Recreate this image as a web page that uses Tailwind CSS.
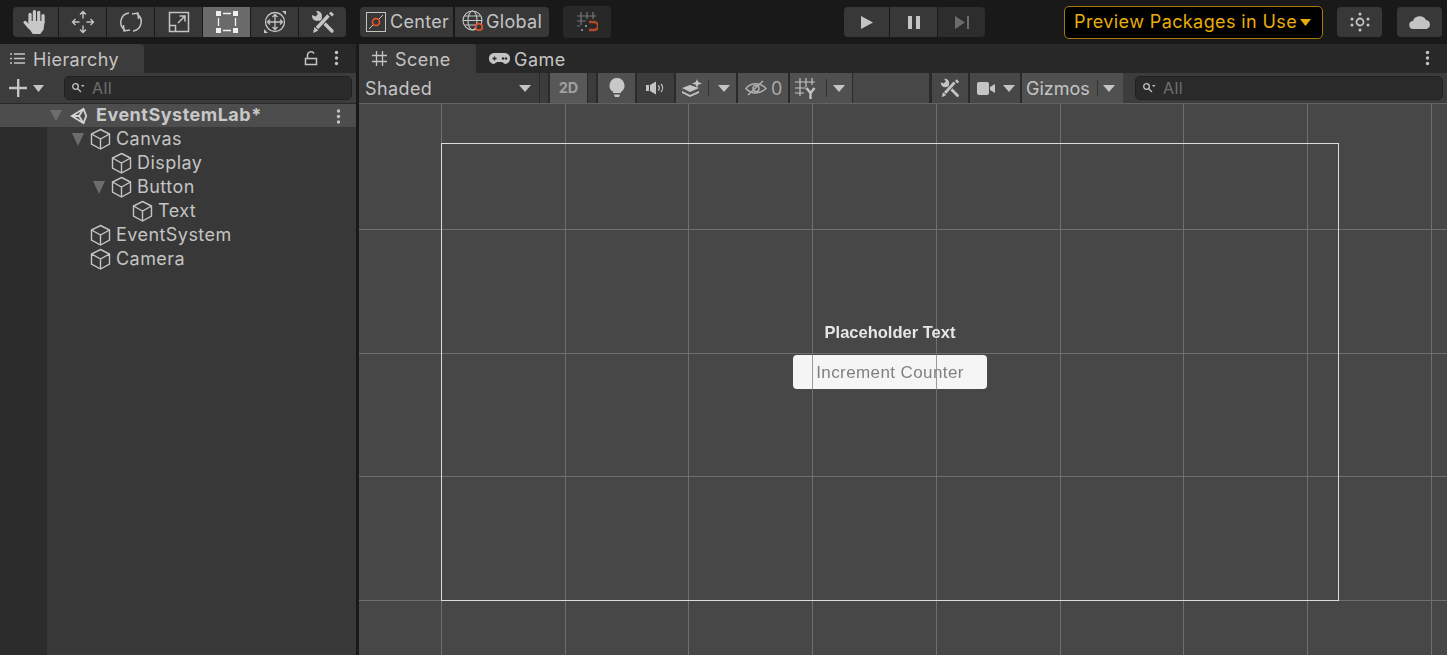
<!DOCTYPE html>
<html lang="en">
<head>
<meta charset="UTF-8">
<title>Unity Editor - Scene</title>
<script src="https://cdn.jsdelivr.net/npm/@tailwindcss/browser@4"></script>
</head>
<body class="bg-[#191919] overflow-hidden font-['Inter',sans-serif] text-[#c4c4c4]">
<div class="w-[1447px] h-[655px] flex flex-col overflow-hidden">

  <!-- main toolbar -->
  <header class="h-[44px] shrink-0 flex items-center pl-[13px] text-[18px] tracking-[0.3px]">
    <div class="flex h-[30px] w-[333px] rounded-[4px] overflow-hidden gap-px">
      <div class="w-[45px] bg-[#383838] flex items-center justify-center">
        <svg width="26" height="26" viewBox="0 0 24 24" fill="#c8c8c8" stroke="#c8c8c8"><path d="M6.500 12V5M10.500 11V2.500M14.500 11V3M18.500 12V6" stroke-width="3" stroke-linecap="round" fill="none"/><path d="M2 12.500 6 17" stroke-width="3" stroke-linecap="round" fill="none"/><path d="M5 11h15l-1 8-3 4H9l-4-6Z" stroke="none"/></svg>
      </div>
      <div class="w-[47px] bg-[#383838] flex items-center justify-center">
        <svg width="24" height="24" viewBox="0 0 24 24" fill="none" stroke="#c4c4c4" stroke-width="1.400"><path d="M12 1.500v7M12 15.500v7M1.500 12h7M15.500 12h7M9 4.500l3-3 3 3M9 19.500l3 3 3-3M4.500 9l-3 3 3 3M19.500 9l3 3-3 3"/></svg>
      </div>
      <div class="w-[47px] bg-[#383838] flex items-center justify-center">
        <svg width="24" height="24" viewBox="0 0 24 24" fill="none" stroke="#c4c4c4" stroke-width="1.500"><path d="M10 3A9.300 9.300 0 0 0 6 20M11 20 5 21l-.5-6M14 21A9.300 9.300 0 0 0 18 4M13 4l6-1 .5 6"/></svg>
      </div>
      <div class="w-[47px] bg-[#383838] flex items-center justify-center">
        <svg width="24" height="24" viewBox="0 0 24 24" fill="none" stroke="#c4c4c4" stroke-width="1.500"><path d="M2.500 2.500h19v19h-19zM2.500 15.500h6v6M11 13l7-7M12.500 6H18v5.500"/></svg>
      </div>
      <div class="w-[47px] bg-[#6a6a6a] flex items-center justify-center">
        <svg width="24" height="24" viewBox="0 0 24 24" fill="#f0f0f0"><path d="M1 1h5v5H1zM18 1h5v5h-5zM1 18h5v5H1zM18 18h5v5h-5z"/><path d="M8 3.500h8M8 20.500h8M3.500 8v8M20.500 8v8" stroke="#f0f0f0" stroke-width="1.300"/></svg>
      </div>
      <div class="w-[47px] bg-[#383838] flex items-center justify-center">
        <svg width="24" height="24" viewBox="0 0 24 24" fill="none" stroke="#c4c4c4" stroke-width="1.300"><circle cx="12" cy="12" r="9.500"/><path d="M12 4.500v15M4.500 12h15M9.500 7 12 4.500 14.500 7M9.500 17l2.500 2.500 2.500-2.500M7 9.500 4.500 12 7 14.500M17 9.500l2.500 2.500-2.500 2.500"/><path d="M19 1h4v4zM1 23v-4l4 4z" fill="#c4c4c4" stroke="none"/></svg>
      </div>
      <div class="w-[47px] bg-[#383838] flex items-center justify-center">
        <svg width="24" height="24" viewBox="0 0 24 24" fill="none"><path d="M7 7 21 21" stroke="#c4c4c4" stroke-width="3.400" stroke-linecap="round"/><circle cx="6" cy="6" r="5" fill="#c4c4c4"/><path d="M0 1h5l2 3-2.500 2.500L1 5Z" fill="#383838"/><path d="M18 5 6 18" stroke="#383838" stroke-width="5.500"/><path d="M17.500 5.500 6 18" stroke="#c4c4c4" stroke-width="3.400"/><path d="M20 1.500l3 3-2 2-3-3zM2 23l1.500-6 4 3.500z" fill="#c4c4c4"/></svg>
      </div>
    </div>

    <div class="ml-[14px] flex h-[30px] w-[189px] rounded-[4px] overflow-hidden gap-[2px]">
      <div class="w-[93px] bg-[#383838] flex items-center pl-[6px] gap-[4px]">
        <svg width="20" height="20" viewBox="0 0 20 20" fill="none"><rect x=".5" y=".5" width="19" height="19" stroke="#c4c4c4"/><path d="M3 17 17 3" stroke="#c4c4c4"/><circle cx="10" cy="10" r="3.500" stroke="#f0562a" stroke-width="1.600" fill="#383838"/></svg>
        <span class="pb-[2px]">Center</span>
      </div>
      <div class="flex-1 bg-[#383838] flex items-center pl-[7px] gap-[1px]">
        <svg width="23" height="24" viewBox="0 0 23 24" fill="none" stroke="#c4c4c4" stroke-width="1.100"><circle cx="10.500" cy="10.500" r="9.500"/><ellipse cx="10.500" cy="10.500" rx="4.500" ry="9.500"/><path d="M1 10.500h19M2.500 6h16M2.500 15h16"/><circle cx="17" cy="17" r="3.300" stroke="#f0562a" stroke-width="1.600" fill="#383838"/></svg>
        <span class="pb-[2px]">Global</span>
      </div>
    </div>

    <div class="ml-[14px] w-[48px] h-[32px] rounded-[4px] bg-[#282828] flex items-center justify-center">
      <svg width="22" height="22" viewBox="0 0 22 22" fill="none" stroke="#777" stroke-width="1.200"><path d="M5 1v13M11 1v7M17 1v7M1 5h19M1 10h9M1 15h3"/><path d="M14 11h5a3.500 3.500 0 0 1 0 8h-5" stroke="#b5492a" stroke-width="2.400" transform="translate(-1 0)"/><path d="M9 14h2v2H9zM5 18h2v2H5z" fill="#888" stroke="none"/></svg>
    </div>

    <div class="ml-[233px] flex h-[30px] w-[141px] rounded-[4px] overflow-hidden gap-px">
      <div class="w-[45px] bg-[#383838] flex items-center justify-center">
        <svg width="14" height="15" viewBox="0 0 14 15" fill="#c4c4c4"><path d="M1 1 13 7.500 1 14Z"/></svg>
      </div>
      <div class="w-[47px] bg-[#383838] flex items-center justify-center">
        <svg width="14" height="15" viewBox="0 0 14 15" fill="#c4c4c4"><path d="M1 1h4v13H1zM9 1h4v13H9z"/></svg>
      </div>
      <div class="flex-1 bg-[#2d2d2d] flex items-center justify-center">
        <svg width="16" height="15" viewBox="0 0 16 15" fill="#6c6c6c"><path d="M1 1 11 7.500 1 14ZM13 1h2v13h-2z"/></svg>
      </div>
    </div>

    <div class="ml-[79px] w-[259px] h-[33px] rounded-[5px] border border-[#a87a0a] bg-black text-[#e8ad0a] flex items-center pl-[9px] text-[18px] tracking-[0.4px] whitespace-nowrap">
      <span class="pb-[2px]">Preview Packages in Use</span>
      <svg class="ml-[3px]" width="11" height="7" viewBox="0 0 11 7" fill="#e8ad0a"><path d="M0 0h11L5.500 7Z"/></svg>
    </div>

    <div class="ml-[14px] w-[45px] h-[30px] rounded-[4px] bg-[#383838] flex items-center justify-center">
      <svg width="20" height="20" viewBox="0 0 20 20" fill="#c4c4c4"><circle cx="10" cy="10" r="3.500" fill="none" stroke="#c4c4c4" stroke-width="1.800"/><circle cx="10" cy="2" r="1.500"/><circle cx="10" cy="18" r="1.500"/><circle cx="2" cy="7" r="1.500"/><circle cx="18" cy="7" r="1.500"/><circle cx="2" cy="13" r="1.500"/><circle cx="18" cy="13" r="1.500"/></svg>
    </div>
    <div class="ml-[15px] w-[45px] h-[30px] rounded-[4px] bg-[#383838] flex items-center justify-center">
      <svg width="22" height="16" viewBox="0 0 22 16" fill="#c4c4c4"><path d="M4.500 15a4 4 0 0 1-.5-8 7 6.500 0 0 1 13-1 4.600 4.600 0 0 1 .5 9Z"/></svg>
    </div>
  </header>

  <div class="flex flex-1 min-h-0 gap-[3px]">

    <!-- hierarchy -->
    <aside class="w-[356px] shrink-0 flex flex-col bg-[#383838]">
      <div class="h-[29px] bg-[#282828] flex relative shrink-0">
        <div class="w-[144px] bg-[#3c3c3c] rounded-tr-[4px] flex items-center pl-[10px] gap-[8px] text-[18px] tracking-[0.4px]">
          <svg width="15" height="13" viewBox="0 0 15 13" fill="none" stroke="#c4c4c4" stroke-width="1.400"><path d="M4 2h11M4 6.500h11M4 11h11"/><path d="M0 2h2M0 6.500h2M0 11h2"/></svg>
          <span class="pt-[2px]">Hierarchy</span>
        </div>
        <svg class="absolute left-[304px] top-[6px]" width="14" height="16" viewBox="0 0 14 16" fill="none" stroke="#c4c4c4" stroke-width="1.500"><path d="M1.500 8.500h11v6h-11zM3.500 8.500V5a3.500 3.500 0 0 1 6.500-1.500"/></svg>
        <svg class="absolute left-[334px] top-[6px]" width="5" height="16" viewBox="0 0 5 16" fill="#c4c4c4"><circle cx="2.500" cy="2.500" r="1.700"/><circle cx="2.500" cy="8" r="1.700"/><circle cx="2.500" cy="13.500" r="1.700"/></svg>
      </div>
      <div class="h-[31px] bg-[#3c3c3c] flex items-center shrink-0 border-b border-[#282828]">
        <svg class="ml-[9px]" width="18" height="18" viewBox="0 0 18 18" fill="#c4c4c4"><path d="M8 0h2.400v18H8zM0 7.800h18v2.400H0z"/></svg>
        <svg class="ml-[6px]" width="11" height="7" viewBox="0 0 11 7" fill="#c4c4c4"><path d="M0 0h11L5.500 7Z"/></svg>
        <div class="ml-[20px] w-[288px] h-[24px] rounded-[5px] bg-[#2a2a2a] border border-[#212121] flex items-center pl-[6px] text-[#6f6f6f] text-[16px] tracking-[0.4px] gap-[7px]">
          <svg width="14" height="12" viewBox="0 0 14 12" fill="none" stroke="#c4c4c4" stroke-width="1.300"><circle cx="4.500" cy="4.500" r="2.800"/><path d="m6.500 6.500 3.500 3.500"/><path d="M10 3h3.500L11.700 5Z" fill="#c4c4c4" stroke="none"/></svg>
          <span>All</span>
        </div>
      </div>
      <div class="flex-1 flex min-h-0 relative text-[18px] tracking-[0.45px] leading-[24px]">
        <div class="w-[47px] bg-[#2c2c2c] shrink-0"></div>
        <div class="flex-1"></div>
        <div class="absolute inset-0">
          <div class="h-[23px] bg-[#4d4d4d] flex items-center pl-[50px] font-bold text-[#c8c8c8] relative tracking-[0.5px]">
            <svg width="12" height="11" viewBox="0 0 12 11" fill="#6c6c6c"><path d="M0 0h12L6 11Z"/></svg>
            <svg class="ml-[8px]" width="18" height="20" viewBox="0 0 20 20" fill="none" stroke="#d4d4d4" stroke-width="2"><path d="M2 10 15 2l3 8-3 8ZM15 2l-5 8 5 8M2 10h8"/></svg>
            <span class="ml-[8px] pb-[1px]">EventSystemLab*</span>
            <svg class="absolute left-[336px] top-[5px]" width="5" height="15" viewBox="0 0 5 15" fill="#c4c4c4"><circle cx="2.500" cy="2" r="1.700"/><circle cx="2.500" cy="7.500" r="1.700"/><circle cx="2.500" cy="13" r="1.700"/></svg>
          </div>
          <ul>
            <li class="h-[24px] flex items-center pl-[72px]">
              <svg width="12" height="13" viewBox="0 0 12 13" fill="#6c6c6c"><path d="M0 0h12L6 13Z"/></svg>
              <svg class="ml-[6px] mr-[5px]" width="21" height="22" viewBox="0 0 21 22" fill="none" stroke="#c4c4c4" stroke-width="1.400"><path d="M10.500 1.500 19.500 6v10l-9 5-9-5V6ZM1.500 6l9 5 9-5M10.500 11v10"/></svg>
              <span>Canvas</span>
            </li>
            <li class="h-[24px] flex items-center pl-[111px]">
              <svg class="mr-[5px]" width="21" height="22" viewBox="0 0 21 22" fill="none" stroke="#c4c4c4" stroke-width="1.400"><path d="M10.500 1.500 19.500 6v10l-9 5-9-5V6ZM1.500 6l9 5 9-5M10.500 11v10"/></svg>
              <span>Display</span>
            </li>
            <li class="h-[24px] flex items-center pl-[93px]">
              <svg width="12" height="13" viewBox="0 0 12 13" fill="#6c6c6c"><path d="M0 0h12L6 13Z"/></svg>
              <svg class="ml-[6px] mr-[5px]" width="21" height="22" viewBox="0 0 21 22" fill="none" stroke="#c4c4c4" stroke-width="1.400"><path d="M10.500 1.500 19.500 6v10l-9 5-9-5V6ZM1.500 6l9 5 9-5M10.500 11v10"/></svg>
              <span>Button</span>
            </li>
            <li class="h-[24px] flex items-center pl-[132px]">
              <svg class="mr-[5px]" width="21" height="22" viewBox="0 0 21 22" fill="none" stroke="#c4c4c4" stroke-width="1.400"><path d="M10.500 1.500 19.500 6v10l-9 5-9-5V6ZM1.500 6l9 5 9-5M10.500 11v10"/></svg>
              <span>Text</span>
            </li>
            <li class="h-[24px] flex items-center pl-[90px]">
              <svg class="mr-[5px]" width="21" height="22" viewBox="0 0 21 22" fill="none" stroke="#c4c4c4" stroke-width="1.400"><path d="M10.500 1.500 19.500 6v10l-9 5-9-5V6ZM1.500 6l9 5 9-5M10.500 11v10"/></svg>
              <span>EventSystem</span>
            </li>
            <li class="h-[24px] flex items-center pl-[90px]">
              <svg class="mr-[5px]" width="21" height="22" viewBox="0 0 21 22" fill="none" stroke="#c4c4c4" stroke-width="1.400"><path d="M10.500 1.500 19.500 6v10l-9 5-9-5V6ZM1.500 6l9 5 9-5M10.500 11v10"/></svg>
              <span>Camera</span>
            </li>
          </ul>
        </div>
      </div>
    </aside>

    <!-- scene -->
    <main class="flex-1 flex flex-col min-w-0">
      <div class="h-[29px] bg-[#282828] flex items-center shrink-0 relative text-[18px] tracking-[0.45px]">
        <div class="w-[117px] h-full bg-[#3c3c3c] rounded-tr-[4px] flex items-center pl-[13px] gap-[8px]">
          <svg width="15" height="15" viewBox="0 0 15 15" fill="none" stroke="#c4c4c4" stroke-width="1.300"><path d="M4.500 0v15M10.500 0v15M0 4.500h15M0 10.500h15"/></svg>
          <span class="pt-[2px]">Scene</span>
        </div>
        <div class="flex items-center pl-[13px] gap-[4px]">
          <svg width="21" height="13" viewBox="0 0 21 13" fill="#c4c4c4"><path d="M5 1h11a5 5 0 0 1 5 5.500 5 5 0 0 1-5 5.500L13 10H8l-3 2A5 5 0 0 1 0 6.500 5 5 0 0 1 5 1Z"/><path d="M3.500 6.500h4M5.500 4.500v4" stroke="#282828" stroke-width="1.300"/><circle cx="14" cy="6.500" r="1.200" fill="#282828"/><circle cx="17" cy="6.500" r="1.200" fill="#282828"/></svg>
          <span class="pt-[2px]">Game</span>
        </div>
        <svg class="absolute right-[17px] top-[6px]" width="5" height="16" viewBox="0 0 5 16" fill="#c4c4c4"><circle cx="2.500" cy="2.500" r="1.700"/><circle cx="2.500" cy="8" r="1.700"/><circle cx="2.500" cy="13.500" r="1.700"/></svg>
      </div>

      <div class="h-[31px] bg-[#2a2a2a] flex shrink-0 text-[18px] tracking-[0.4px] border-b border-[#636363]">
        <div class="w-[180px] bg-[#3c3c3c] flex items-center pl-[6px] justify-between pr-[8px]">
          <span>Shaded</span>
          <svg width="12" height="7" viewBox="0 0 12 7" fill="#c4c4c4"><path d="M0 0h12L6 7Z"/></svg>
        </div>
        <div class="w-[8px] ml-px bg-[#3c3c3c]"></div>
        <div class="w-[37px] ml-[2px] bg-[#585858] flex items-center justify-center text-[14.500px] font-bold text-[#a0a0a0] tracking-normal">2D</div>
        <div class="w-[8px] ml-px bg-[#3c3c3c]"></div>
        <div class="w-[37px] ml-[2px] bg-[#505050] flex items-center justify-center">
          <svg width="16" height="20" viewBox="0 0 16 20" fill="#c8c8c8"><path d="M8 0a7.500 7.500 0 0 1 4 13.800V15H4v-1.200A7.500 7.500 0 0 1 8 0ZM5 16.500h6l-1 2.500H6Z"/></svg>
        </div>
        <div class="w-[37px] ml-[2px] bg-[#3c3c3c] flex items-center justify-center">
          <svg width="20" height="14" viewBox="0 0 20 14" fill="#c4c4c4"><path d="M0 4h3v6H0zM4 4l6-3.500v13L4 10Z"/><path d="M12 4.500a3 3 0 0 1 0 5M15 3a6 6 0 0 1 0 8" fill="none" stroke="#c4c4c4" stroke-width="1.200"/></svg>
        </div>
        <div class="w-[60px] ml-[2px] bg-[#505050] flex items-center">
          <svg class="ml-[6px]" width="20" height="18" viewBox="0 0 20 18" fill="#c4c4c4"><path d="M8 6 17 9l-9 4-8-4ZM0 12l8 4 9-4v2l-9 4-8-4Z"/><path d="m15 0 1.200 3L20 4.500l-3.800 1.300L15 9l-1.200-3.200L10 4.500l3.800-1.500Z"/></svg>
          <div class="w-px h-[16px] bg-[#333] ml-[6px]"></div>
          <svg class="ml-[9px]" width="12" height="7" viewBox="0 0 12 7" fill="#c4c4c4"><path d="M0 0h12L6 7Z"/></svg>
        </div>
        <div class="w-[50px] ml-[2px] bg-[#505050] flex items-center pl-[7px] gap-[4px] tracking-normal text-[#a8a8a8]">
          <svg width="22" height="18" viewBox="0 0 22 18" fill="none" stroke="#b0b0b0" stroke-width="1.400"><path d="M1 9.500C5 4 15 2.500 21 9.500 15 15.500 6 15.500 1 9.500Z"/><circle cx="11" cy="9.500" r="3"/><path d="M3 16 18 2"/></svg>
          <span>0</span>
        </div>
        <div class="w-[62px] ml-[2px] bg-[#505050] flex items-center">
          <svg class="ml-[4px]" width="22" height="21" viewBox="0 0 22 21" fill="none" stroke="#c4c4c4" stroke-width="1.200"><path d="M6 0v18M12 0v9M18 0v7M1 4h20M1 10h11M1 15h9"/><path d="M12.500 10l4 5 4-5M16.500 15v6" stroke-width="2.400"/></svg>
          <div class="w-px h-[18px] bg-[#333] ml-[10px]"></div>
          <svg class="ml-[6px]" width="12" height="7" viewBox="0 0 12 7" fill="#c4c4c4"><path d="M0 0h12L6 7Z"/></svg>
        </div>
        <div class="w-[76px] ml-px bg-[#474747]"></div>
        <div class="w-[36px] ml-[3px] bg-[#474747] flex items-center justify-center">
          <svg width="20" height="20" viewBox="0 0 24 24" fill="none"><path d="M7 7 21 21" stroke="#c4c4c4" stroke-width="3.400" stroke-linecap="round"/><circle cx="6" cy="6" r="5" fill="#c4c4c4"/><path d="M0 1h5l2 3-2.500 2.500L1 5Z" fill="#474747"/><path d="M18 5 6 18" stroke="#474747" stroke-width="5.500"/><path d="M17.500 5.500 6 18" stroke="#c4c4c4" stroke-width="3.400"/><path d="M20 1.500l3 3-2 2-3-3zM2 23l1.500-6 4 3.500z" fill="#c4c4c4"/></svg>
        </div>
        <div class="w-[50px] ml-[2px] bg-[#474747] flex items-center pl-[7px]">
          <svg width="18" height="13" viewBox="0 0 18 13" fill="#c4c4c4"><rect width="12" height="13" rx="2"/><path d="m13 5 5-3v9l-5-3Z"/></svg>
          <svg class="ml-[8px]" width="12" height="7" viewBox="0 0 12 7" fill="#c4c4c4"><path d="M0 0h12L6 7Z"/></svg>
        </div>
        <div class="w-[101px] ml-[2px] bg-[#505050] flex items-center pl-[4px] tracking-[0px]">
          <span>Gizmos</span>
          <div class="w-px h-[16px] bg-[#333] ml-[7px]"></div>
          <svg class="ml-[5px]" width="12" height="7" viewBox="0 0 12 7" fill="#c4c4c4"><path d="M0 0h12L6 7Z"/></svg>
        </div>
        <div class="flex-1 bg-[#3c3c3c] pl-[12px] pt-[3px]">
          <div class="w-[308px] h-[24px] rounded-[5px] bg-[#2a2a2a] border border-[#212121] flex items-center pl-[6px] text-[#6f6f6f] text-[16px] tracking-[0.4px] gap-[7px]">
            <svg width="14" height="12" viewBox="0 0 14 12" fill="none" stroke="#c4c4c4" stroke-width="1.300"><circle cx="4.500" cy="4.500" r="2.800"/><path d="m6.500 6.500 3.500 3.500"/><path d="M10 3h3.500L11.700 5Z" fill="#c4c4c4" stroke="none"/></svg>
            <span>All</span>
          </div>
        </div>
      </div>

      <!-- viewport: scene contents sit on a free canvas -->
      <div class="flex-1 relative bg-[#474747] overflow-hidden">
        <svg class="absolute inset-0" width="1088" height="551" fill="none" stroke="#6f6f6f" stroke-width="1" shape-rendering="crispEdges">
          <path d="M82.500 0v551M206.500 0v551M329.500 0v551M453.500 0v551M577.500 0v551M701.500 0v551M824.500 0v551M948.500 0v551M1072.500 0v551"/>
          <path d="M0 125.500h1088M0 249.500h1088M0 372.500h1088M0 496.500h1088"/>
        </svg>
        <div class="absolute left-[82px] top-[39px] w-[898px] h-[458px] border border-[#dcdcdc]"></div>
        <div class="absolute left-[434px] top-[251px] w-[194px] h-[34px] rounded-[4px] bg-[#f5f5f5] flex items-center justify-center text-[#808080] text-[17px] tracking-[0.4px] font-['Liberation_Sans',sans-serif] blur-[0.3px]"><span class="pt-[1px]">Increment Counter</span></div>
        <svg class="absolute inset-0" width="1088" height="551" fill="none" stroke="#9a9a9a" stroke-width="1" shape-rendering="crispEdges"><path d="M453.500 251v34M577.500 251v34"/></svg>
        <div class="absolute left-[431px] top-[216px] w-[200px] text-center text-[#e6e6e6] text-[16.500px] font-bold font-['Liberation_Sans',sans-serif] whitespace-nowrap blur-[0.3px]">Placeholder Text</div>
      </div>
    </main>
  </div>
</div>
</body>
</html>
